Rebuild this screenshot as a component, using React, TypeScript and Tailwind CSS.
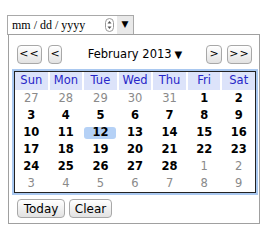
import React from "react";

const F = { fontFamily: '"DejaVu Sans", Verdana, sans-serif' };

type Cell = [number, boolean];
const rows: Cell[][] = [
  [[27, false], [28, false], [29, false], [30, false], [31, false], [1, true], [2, true]],
  [[3, true], [4, true], [5, true], [6, true], [7, true], [8, true], [9, true]],
  [[10, true], [11, true], [12, true], [13, true], [14, true], [15, true], [16, true]],
  [[17, true], [18, true], [19, true], [20, true], [21, true], [22, true], [23, true]],
  [[24, true], [25, true], [26, true], [27, true], [28, true], [1, false], [2, false]],
  [[3, false], [4, false], [5, false], [6, false], [7, false], [8, false], [9, false]],
];
const days = ["Sun", "Mon", "Tue", "Wed", "Thu", "Fri", "Sat"];

function Btn({ children, className = "" }: { children: React.ReactNode; className?: string }) {
  return (
    <div
      className={`flex h-[19px] items-center justify-center rounded-[4px] border border-[#a8a8a8] bg-gradient-to-b from-white to-[#e2e2e2] text-[11px] text-black ${className}`}
    >
      {children}
    </div>
  );
}

export default function App() {
  return (
    <div className="h-[243px] w-[277px] bg-white pl-[7px] pt-[15px]" style={F}>
      <div className="flex h-[20px] w-[127px] items-center border border-[#a9a9a9] bg-white">
        <span
          className="pl-[4px] text-[12px] leading-none text-black"
          style={{ fontFamily: '"Liberation Serif", serif' }}
        >
          mm / dd / yyyy
        </span>
        <svg width="9" height="14" viewBox="0 0 9 14" className="ml-auto mr-[3px]">
          <rect x="0.5" y="0.5" width="8" height="13" rx="4" fill="white" stroke="#9a9a9a" />
          <path d="M2.5 5.5 L4.5 3 L6.5 5.5 Z" fill="#555" />
          <path d="M2.5 8.5 L4.5 11 L6.5 8.5 Z" fill="#555" />
        </svg>
        <div className="flex h-full w-[16px] items-center justify-center bg-[#e9e9e9] text-[9px] text-black">
          ▼
        </div>
      </div>
      <div className="-mt-px ml-[1px] h-[190px] w-[252px] border border-[#a0a0a0] bg-white">
        <div className="mt-[10px] flex items-center pl-[8px] pr-[7px]">
          <Btn className="w-[25px] tracking-[1px]">&lt;&lt;</Btn>
          <Btn className="ml-[6px] w-[14px]">&lt;</Btn>
          <div className="flex flex-1 items-center justify-center pl-[2px] text-[11.5px] text-black">
            February 2013<span className="ml-[3px] text-[10px]">▼</span>
          </div>
          <Btn className="w-[16px]">&gt;</Btn>
          <Btn className="ml-[5px] w-[25px] tracking-[1px]">&gt;&gt;</Btn>
        </div>
        <div className="ml-[5px] mt-[7px] w-[242px] border border-[#222] outline outline-2 outline-[#a9c8f0]">
          <div className="grid grid-cols-7 gap-x-[2px] bg-white">
            {days.map((d) => (
              <div
                key={d}
                className="flex h-[18px] items-center justify-center bg-[#dce3fa] text-[11.5px] text-[#2626c8]"
              >
                {d}
              </div>
            ))}
          </div>
          {rows.map((r, i) => (
            <div key={i} className="grid grid-cols-7 gap-x-[2px]">
              {r.map(([n, cur], j) => (
                <div key={j} className="flex h-[17px] items-center justify-center">
                  <span
                    className={`flex h-[12px] items-center justify-center rounded-[3px] text-[11.5px] ${
                      cur ? "font-bold text-black" : "text-[#8a8a8a]"
                    } ${i === 2 && j === 2 ? "w-[32px] bg-[#b5d1f6]" : ""}`}
                  >
                    {n}
                  </span>
                </div>
              ))}
            </div>
          ))}
        </div>
        <div className="ml-[8px] mt-[6px] flex gap-[4px]">
          <Btn className="w-[48px] text-[12px]">Today</Btn>
          <Btn className="w-[43px] text-[12px]">Clear</Btn>
        </div>
      </div>
    </div>
  );
}
